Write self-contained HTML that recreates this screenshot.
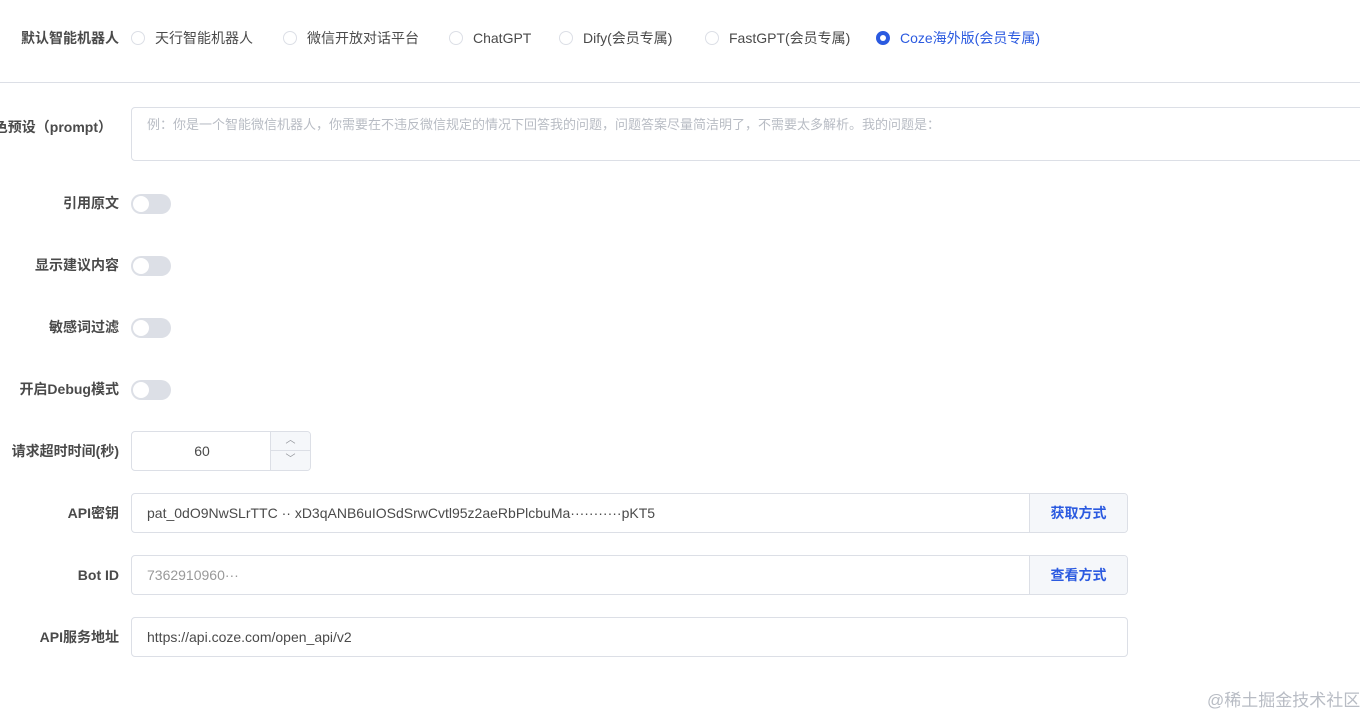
<!DOCTYPE html>
<html><head><meta charset="utf-8"><style>
*{box-sizing:border-box;margin:0;padding:0}
body{width:1360px;height:715px;background:#fff;font-family:"Liberation Sans","Noto Sans CJK SC",sans-serif;font-size:14px;color:#4a4a4a;position:relative;overflow:hidden}
.a{position:absolute}
.lbl{position:absolute;right:1241px;font-weight:bold;color:#4a4a4a;white-space:nowrap;line-height:20px}
.r{position:absolute;top:31px;display:flex;align-items:center;white-space:nowrap;color:#4a4a4a;line-height:14px}
.r i{display:inline-block;width:14px;height:14px;border:1px solid #dcdfe6;border-radius:50%;margin-right:10px}
.r.on{color:#2b5ae0}
.r.on i{border-color:#2b5ae0;background:#2b5ae0;position:relative}
.r.on i:after{content:"";position:absolute;left:3px;top:3px;width:6px;height:6px;border-radius:50%;background:#fff}
.tg{position:absolute;left:131px;width:40px;height:20px;border-radius:10px;background:#dcdfe6}
.tg:after{content:"";position:absolute;left:2px;top:2px;width:16px;height:16px;border-radius:50%;background:#fff}
.in{position:absolute;left:131px;height:40px;border:1px solid #dcdfe6;border-radius:4px;padding-left:15px;line-height:38px;color:#4a4a4a;white-space:nowrap;overflow:hidden}
.btn{position:absolute;right:0;top:0;bottom:0;width:98px;background:#f5f7fa;border-left:1px solid #dcdfe6;color:#2b5ae0;text-align:center;font-weight:bold;padding:0}
</style></head><body>
<div class="lbl" style="top:28px">默认智能机器人</div>
<div class="r" style="left:131px"><i></i>天行智能机器人</div>
<div class="r" style="left:283px"><i></i>微信开放对话平台</div>
<div class="r" style="left:449px"><i></i>ChatGPT</div>
<div class="r" style="left:559px"><i></i>Dify(会员专属)</div>
<div class="r" style="left:705px"><i></i>FastGPT(会员专属)</div>
<div class="r on" style="left:876px"><i></i>Coze海外版(会员专属)</div>
<div class="a" style="left:0;top:82px;width:1360px;height:1px;background:#dcdfe6"></div>

<div class="lbl" style="top:117px;right:1248px">色预设（prompt）</div>
<div class="a" style="left:131px;top:107px;width:1240px;height:54px;border:1px solid #dcdfe6;border-radius:4px;padding:8px 15px;color:#b8bcc4;font-size:13px;line-height:18px">例：你是一个智能微信机器人，你需要在不违反微信规定的情况下回答我的问题，问题答案尽量简洁明了，不需要太多解析。我的问题是：</div>

<div class="lbl" style="top:193px">引用原文</div><div class="tg" style="top:194px"></div>
<div class="lbl" style="top:255px">显示建议内容</div><div class="tg" style="top:256px"></div>
<div class="lbl" style="top:317px">敏感词过滤</div><div class="tg" style="top:318px"></div>
<div class="lbl" style="top:379px">开启Debug模式</div><div class="tg" style="top:380px"></div>

<div class="lbl" style="top:441px">请求超时时间(秒)</div>
<div class="in" style="top:431px;width:180px;padding:0">
<div style="position:absolute;left:0;width:140px;text-align:center">60</div>
<div style="position:absolute;right:0;top:0;width:40px;height:38px;background:#f5f7fa;border-left:1px solid #dcdfe6">
<div style="height:19px;border-bottom:1px solid #dcdfe6;font-size:10px;line-height:18px;text-align:center;color:#909399">︿</div>
<div style="height:19px;font-size:10px;line-height:18px;text-align:center;color:#909399">﹀</div></div></div>

<div class="lbl" style="top:503px">API密钥</div>
<div class="in" style="top:493px;width:997px">pat_0dO9NwSLrTTC ·· xD3qANB6uIOSdSrwCvtl95z2aeRbPlcbuMa···········pKT5<div class="btn">获取方式</div></div>

<div class="lbl" style="top:565px">Bot ID</div>
<div class="in" style="top:555px;width:997px;color:#999">7362910960···<div class="btn">查看方式</div></div>

<div class="lbl" style="top:627px">API服务地址</div>
<div class="in" style="top:617px;width:997px">https://api.coze.com/open_api/v2</div>

<div class="a" style="left:1207px;top:686px;color:#b8bcc4;font-size:17px;white-space:nowrap">@稀土掘金技术社区</div>
</body></html>
